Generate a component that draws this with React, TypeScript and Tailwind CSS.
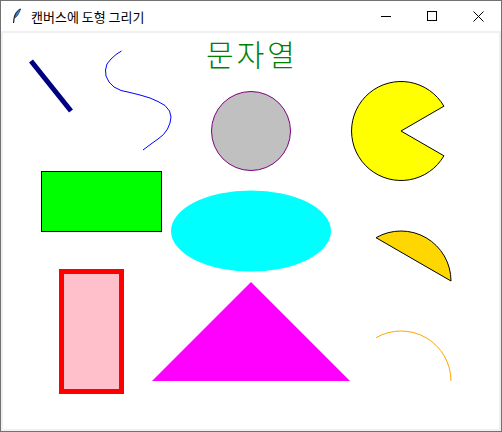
import React from "react";

function Feather() {
  return (
    <svg width="10" height="16" viewBox="0 0 10 16">
      <path d="M8.5 1 C5 3 2.5 7 2 11 L1.5 15" stroke="#1a1a1a" strokeWidth="1.2" fill="none" />
      <path d="M8.5 1 C6 2 3.5 5 2.6 10 C4.5 9 7 6 8.5 1 Z" fill="#3f7fd8" stroke="#1b3b6b" strokeWidth="0.8" />
    </svg>
  );
}

export default function App() {
  const curve = [
    [121.5, 51], [116, 54.5], [111, 59], [107, 64], [105.5, 70], [106, 76], [109, 82], [114, 87],
    [121, 90.5], [130, 92.5], [140, 95], [150, 98], [158, 101.5], [165, 105.5], [169.5, 111],
    [171, 117], [170, 123], [167.5, 129], [163.5, 134.5], [158, 139], [151, 144], [143, 150],
  ]
    .map((p) => p.join(","))
    .join(" ");

  return (
    <div className="w-[502px] h-[432px] flex flex-col border border-[#717171] bg-white" style={{ fontFamily: '"Noto Sans CJK KR", "Noto Sans", sans-serif' }}>
      <div className="h-[30px] flex items-center bg-white shrink-0">
        <div className="w-[30px] flex justify-center pl-[2px]">
          <Feather />
        </div>
        <span className="text-[13px] text-black leading-none">캔버스에 도형 그리기</span>
        <div className="ml-auto flex h-full">
          <div className="w-[46px] h-full flex items-center justify-center">
            <div className="w-[10px] h-px bg-black" />
          </div>
          <div className="w-[46px] h-full flex items-center justify-center">
            <div className="w-[10px] h-[10px] border border-black" />
          </div>
          <div className="w-[46px] h-full flex items-center justify-center">
            <svg width="11" height="11" viewBox="0 0 11 11">
              <path d="M0.5 0.5 L10.5 10.5 M10.5 0.5 L0.5 10.5" stroke="black" strokeWidth="1" />
            </svg>
          </div>
        </div>
      </div>
      <div className="flex-1 bg-[#f0f0f0] p-[2px]">
        <div className="relative w-full h-full bg-white">
          <svg className="absolute" style={{ left: -2, top: -2 }} width="500" height="400" viewBox="1 31 500 400">
            <line x1="31" y1="61" x2="71" y2="111" stroke="#000080" strokeWidth="5" />
            <polyline points={curve} fill="none" stroke="#0000ff" strokeWidth="1" strokeLinejoin="round" />
            <circle cx="251" cy="131" r="39.5" fill="#c0c0c0" stroke="#800080" strokeWidth="1" />
            <path d="M401 131 L443.9 106.2 A49.5 49.5 0 1 0 443.9 155.8 Z" fill="#ffff00" stroke="black" strokeWidth="1" />
            <rect x="41.5" y="171.5" width="120" height="60" fill="#00ff00" stroke="black" strokeWidth="1" />
            <ellipse cx="251" cy="231" rx="80" ry="40.5" fill="#00ffff" />
            <path d="M451 281 A50 50 0 0 0 376 237.7 Z" fill="#ffd700" stroke="black" strokeWidth="1" />
            <rect x="61.5" y="271.5" width="60" height="120" fill="#ffc0cb" stroke="#ff0000" strokeWidth="5" />
            <polygon points="152,381 251,282 350,381" fill="#ff00ff" />
            <path d="M451 381 A50 50 0 0 0 376 337.7" fill="none" stroke="#ffa500" strokeWidth="1" />
          </svg>
          <span className="absolute left-[154px] top-[5px] w-[190px] text-center text-[30px] leading-none tracking-[3px] font-light text-[#008000]">
            문자열
          </span>
        </div>
      </div>
    </div>
  );
}
